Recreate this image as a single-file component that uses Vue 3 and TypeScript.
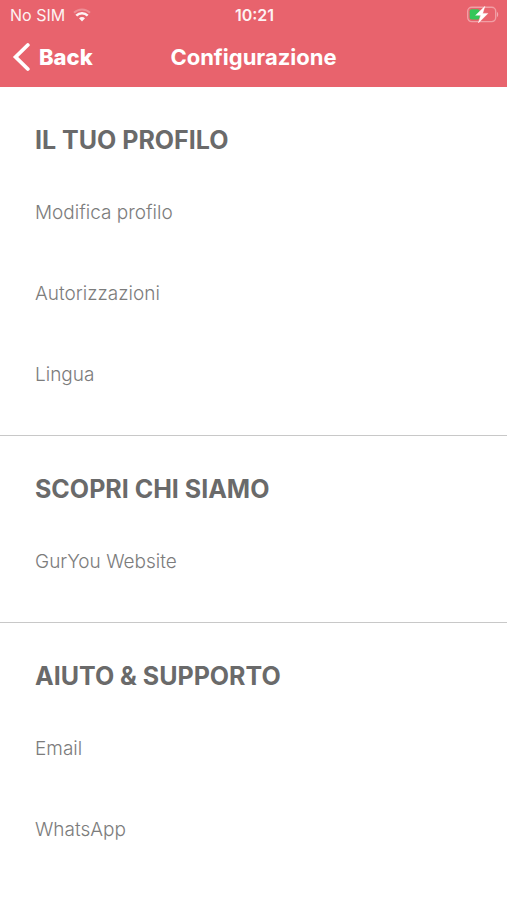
<script setup lang="ts">
interface Section {
  id: string
  title: string
  items: string[]
}

const sections: Section[] = [
  { id: 'profilo', title: 'IL TUO PROFILO', items: ['Modifica profilo', 'Autorizzazioni', 'Lingua'] },
  { id: 'scopri', title: 'SCOPRI CHI SIAMO', items: ['GurYou Website'] },
  { id: 'supporto', title: 'AIUTO & SUPPORTO', items: ['Email', 'WhatsApp'] },
]
</script>

<template>
  <div class="screen">
    <header class="header">
      <div class="status">
        <div class="carrier">
          <span>No SIM</span>
          <svg class="wifi" width="18" height="14" viewBox="0 0 18 14" aria-hidden="true">
            <path d="M1 4.8C5.5.3 12.5.3 17 4.8" fill="none" stroke="#fff" stroke-opacity=".3" stroke-width="2" />
            <path d="M3.3 7.6C6.4 4.4 11.6 4.4 14.7 7.6" fill="none" stroke="#fff" stroke-width="2.5" />
            <path d="M6 10.3C7.8 8.5 10.2 8.5 12 10.3L9 13.4Z" fill="#fff" />
          </svg>
        </div>
        <time class="clock">10:21</time>
        <svg class="battery" width="33" height="18" viewBox="0 0 33 18" aria-hidden="true">
          <rect x="1.7" y="1.2" width="28" height="14.4" rx="4" fill="none" stroke="#fff" stroke-opacity=".38" stroke-width="1.4" />
          <path d="M31 6c1.6.5 1.6 4.5 0 5z" fill="#fff" fill-opacity=".45" />
          <rect x="3.7" y="3.2" width="10" height="10.4" rx="2" fill="#35c759" />
          <path d="M18.9.3 9.6 9.3h5.1L12.4 16.9 21.9 7.4h-5.2z" fill="#fff" stroke="#fff" stroke-width=".4" />
        </svg>
      </div>
      <nav class="nav">
        <button class="back" type="button">
          <svg width="18" height="30" viewBox="0 0 18 30" aria-hidden="true">
            <path d="M15.8 3 3.6 15l12.2 12" fill="none" stroke="#fff" stroke-width="3.8" stroke-linecap="round" stroke-linejoin="miter" />
          </svg>
          <span>Back</span>
        </button>
        <h1 class="title">Configurazione</h1>
      </nav>
    </header>
    <main>
      <section v-for="section in sections" :key="section.id" class="section" :aria-labelledby="section.id">
        <h2 :id="section.id" class="heading">{{ section.title }}</h2>
        <ul class="list">
          <li v-for="item in section.items" :key="item">
            <a class="item" href="#">{{ item }}</a>
          </li>
        </ul>
      </section>
    </main>
  </div>
</template>

<style>
body {
  margin: 0;
  background: #fff;
}
</style>

<style scoped>
.screen {
  font-family: Inter, "Liberation Sans", sans-serif;
  color: #6a6a6a;
}
.header {
  padding-bottom: 3px;
  background: #e8636d;
  color: #fff;
}
.status {
  display: grid;
  grid-template-columns: 1fr auto 1fr;
  align-items: center;
  height: 30px;
  padding: 0 8px 0 10px;
  font-size: 16px;
  line-height: 20px;
}
.carrier {
  display: flex;
  align-items: center;
  gap: 8px;
  opacity: 0.92;
}
.clock {
  font-weight: 600;
  opacity: 0.92;
}
.battery {
  justify-self: end;
}
.nav {
  display: grid;
  grid-template-columns: 1fr auto 1fr;
  align-items: center;
  height: 54px;
  padding: 0 12px;
}
.back {
  display: flex;
  align-items: center;
  justify-self: start;
  gap: 9px;
  padding: 0;
  border: 0;
  background: none;
  color: inherit;
  font-family: inherit;
  font-size: 22px;
  font-weight: 800;
  line-height: 30px;
}
.title {
  margin: 0;
  font-size: 22px;
  font-weight: 700;
  line-height: 30px;
}
.section {
  padding: 36px 35px 20px;
  border-bottom: 1px solid #c8c8c8;
}
.section:last-child {
  border-bottom: 0;
}
.heading {
  margin: 0 0 15px;
  font-size: 25px;
  font-weight: 700;
  line-height: 34px;
}
.list {
  margin: 0;
  padding: 0;
  list-style: none;
}
.item {
  display: block;
  color: #7c7c7c;
  font-size: 19px;
  font-weight: 300;
  line-height: 81px;
  text-decoration: none;
}
</style>
